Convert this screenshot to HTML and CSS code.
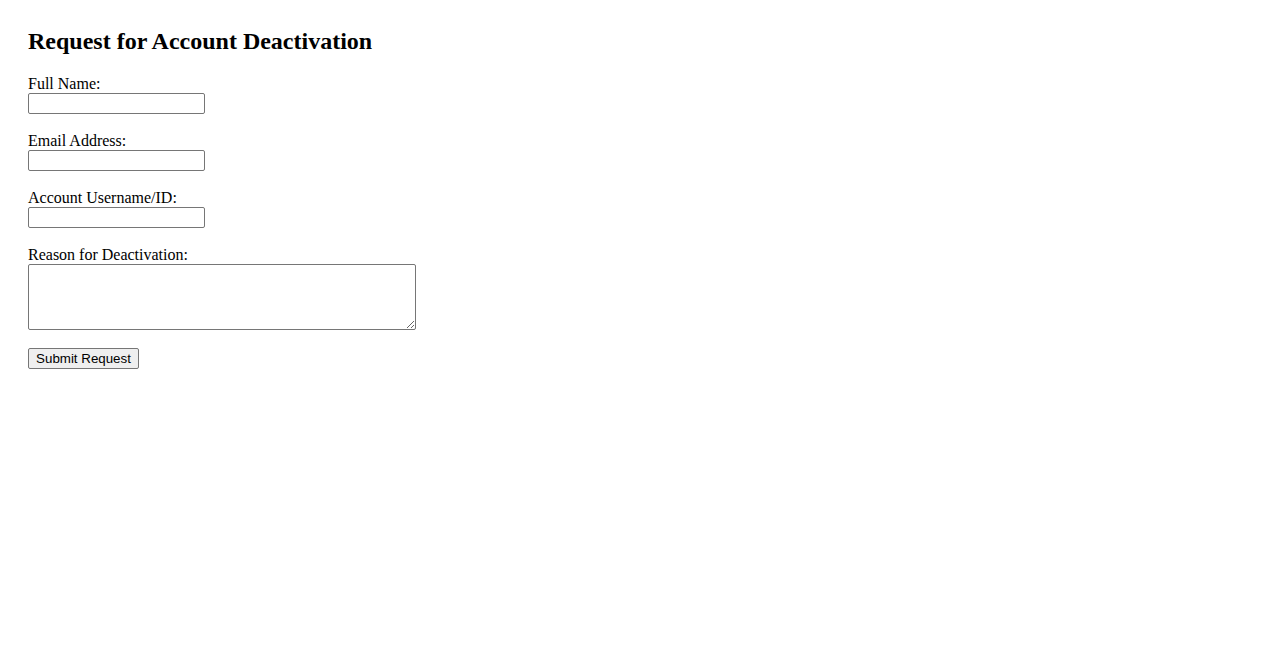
FILE: index.html
```html
<!DOCTYPE html>
<html>
<head>
<meta charset="utf-8">
<title>Request for Account Deactivation</title>
<link rel="stylesheet" href="styles.css">
</head>
<body>
<div class="page">
  <h2 class="title">Request for Account Deactivation</h2>
  <form class="form">
    <label class="label" for="fullname">Full Name:</label>
    <input class="field" type="text" id="fullname">
    <label class="label" for="email">Email Address:</label>
    <input class="field" type="email" id="email">
    <label class="label" for="username">Account Username/ID:</label>
    <input class="field" type="text" id="username">
    <label class="label" for="reason">Reason for Deactivation:</label>
    <textarea class="area" id="reason"></textarea>
    <button class="submit" type="submit">Submit Request</button>
  </form>
</div>
</body>
</html>
```

FILE: styles.css
```css
html, body {
  margin: 0;
  padding: 0;
  background: #ffffff;
}
body {
  font-family: "Liberation Serif", "Times New Roman", serif;
  font-size: 16px;
  color: #000000;
}
.page {
  padding: 27px 28px 28px 28px;
}
.title {
  margin: 0 0 21px 0;
  font-size: 24px;
  line-height: 28px;
  font-weight: bold;
}
.form {
  display: flex;
  flex-direction: column;
  align-items: flex-start;
}
.label {
  display: block;
  line-height: 15px;
  height: 17px;
}
.field {
  box-sizing: border-box;
  width: 177px;
  height: 21px;
  margin: 0 0 19px 0;
  padding: 1px 2px;
  border: 1px solid #767676;
  border-radius: 2px;
  font-family: "Liberation Sans", Arial, sans-serif;
  font-size: 13.333px;
  background: #ffffff;
}
.area {
  box-sizing: border-box;
  width: 388px;
  height: 66px;
  margin: 0 0 18px 0;
  padding: 2px;
  border: 1px solid #767676;
  border-radius: 2px;
  font-family: "Liberation Mono", monospace;
  font-size: 13.333px;
  background: #ffffff;
}
.submit {
  box-sizing: border-box;
  height: 21px;
  width: 111px;
  padding: 1px 6px;
  border: 1px solid #767676;
  border-radius: 2px;
  background: #efefef;
  color: #000000;
  font-family: "Liberation Sans", Arial, sans-serif;
  font-size: 13.333px;
  line-height: 15px;
}
```
